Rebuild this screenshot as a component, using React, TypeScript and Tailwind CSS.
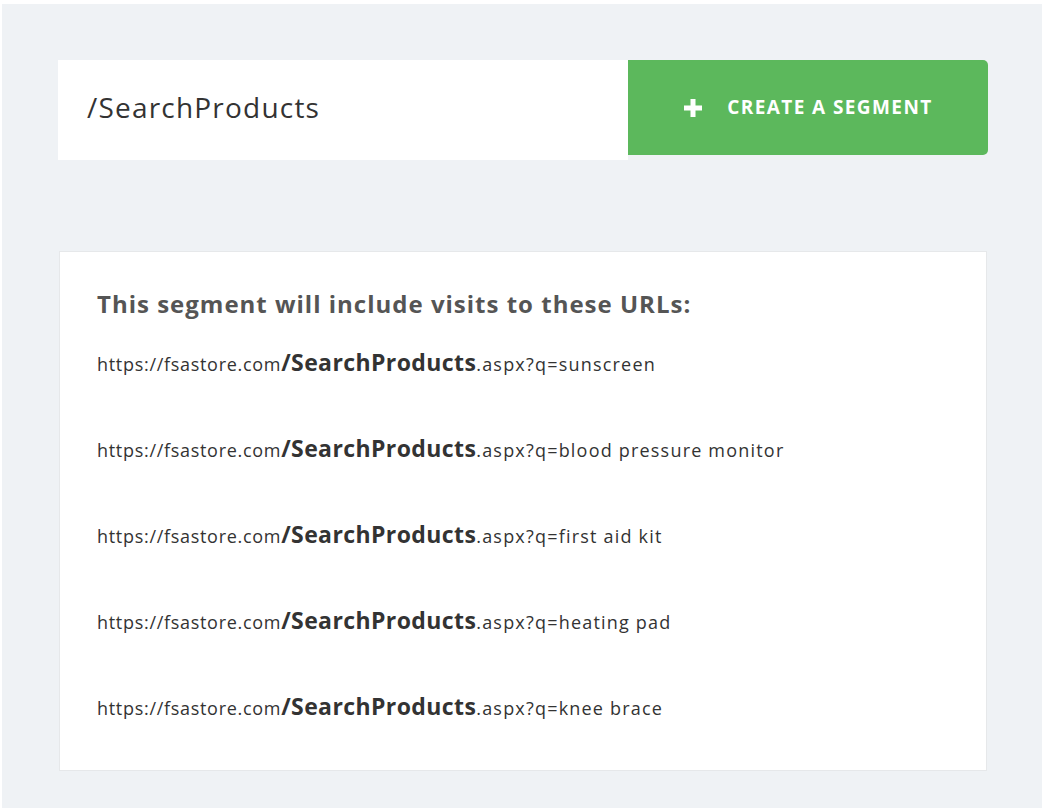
import React from 'react';

const queries = ['sunscreen', 'blood pressure monitor', 'first aid kit', 'heating pad', 'knee brace'];

const App = () => {
  return (
    <div className="w-[1042px] h-[808px] bg-white pt-[4px] pl-[2px]" style={{ fontFamily: '"Open Sans", Lato, sans-serif' }}>
      <div className="h-full bg-[#eff2f5] pl-[56px] pr-[54px] pt-[56px]">
        <div className="flex items-start">
          <div className="w-[570px] h-[100px] bg-white flex items-center pl-[29px] pb-[6px] text-[28px] text-[#333] tracking-[1.2px]">
            /SearchProducts
          </div>
          <button className="w-[360px] h-[95px] bg-[#5cb85c] rounded-r-[5px] flex items-center justify-center text-white font-bold text-[19px] tracking-[1.4px]">
            <svg width="20" height="20" viewBox="0 0 20 20" className="mr-[24px]">
              <path d="M10 1v18M1 10h18" stroke="white" strokeWidth="5" />
            </svg>
            CREATE A SEGMENT
          </button>
        </div>
        <div className="mt-[91px] ml-[1px] w-[928px] h-[520px] bg-white border border-[#e6e8ea] pl-[37px] pt-[36px]">
          <h2 className="text-[24px] font-bold text-[#555] leading-[32px] tracking-[1px]">This segment will include visits to these URLs:</h2>
          <div className="mt-[26px]">
            {queries.map(q => (
              <div key={q} className="h-[86px] text-[18px] text-[#333] leading-[32px] tracking-[0.7px]">
                https://fsastore.com<span className="font-bold text-[23px] tracking-[0.4px]">/SearchProducts</span>
                <span className="tracking-[1.2px]">.aspx?q={q}</span>
              </div>
            ))}
          </div>
        </div>
      </div>
    </div>
  );
};

export default App;
